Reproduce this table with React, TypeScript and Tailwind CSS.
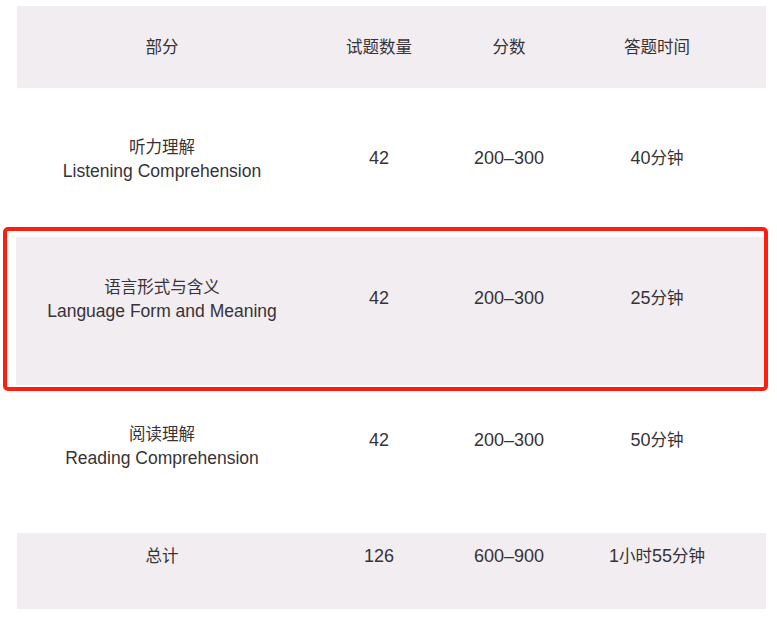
import React from "react";

const font = {
  fontFamily: '"Liberation Sans", "Noto Sans CJK SC", sans-serif',
};

const cols = "grid grid-cols-[290px_144px_116px_180px] text-center";

function Num({ children }: { children: string }) {
  return <span className="text-[18px]">{children}</span>;
}

function Cells({
  a,
  b,
  c,
  d,
  e,
  numPad = "pt-[11px]",
}: {
  a: string;
  b: string;
  c: string;
  d: string;
  e: string;
  numPad?: string;
}) {
  return (
    <div className={cols}>
      <div className="flex flex-col items-center leading-[24px]">
        <div>{a}</div>
        <div className="text-[17.5px]">{b}</div>
      </div>
      <div className={"leading-[24px] " + numPad}>
        <Num>{c}</Num>
      </div>
      <div className={"leading-[24px] " + numPad}>
        <Num>{d}</Num>
      </div>
      <div className={"leading-[24px] " + numPad}>
        <Num>{e}</Num>
        <span>分钟</span>
      </div>
    </div>
  );
}

export default function App() {
  return (
    <div
      className="w-[777px] h-[627px] bg-white text-[16.5px] text-[#383236] overflow-hidden"
      style={font}
    >
      <div className="pt-[6px]">
        <div className="ml-[17px] mr-[11px] h-[82px] bg-[#f1edf0] flex items-center">
          <div className={cols + " w-full"}>
            <div>部分</div>
            <div>试题数量</div>
            <div>分数</div>
            <div>答题时间</div>
          </div>
        </div>

        <div className="h-[139px] pl-[17px] pt-[47px]">
          <Cells a="听力理解" b="Listening Comprehension" c="42" d="200–300" e="40" />
        </div>

        <div className="ml-[3px] mr-[9px] h-[164px] border-[4px] border-[#fe1e10] rounded-[5px] pt-[6px] pb-[2px]">
          <div className="ml-[9px] h-[148px] bg-[#f1edf0] pt-[38px] pl-[1px]">
            <Cells a="语言形式与含义" b="Language Form and Meaning" c="42" d="200–300" e="25" />
          </div>
        </div>

        <div className="h-[142px] pl-[17px] pt-[31px]">
          <Cells
            a="阅读理解"
            b="Reading Comprehension"
            c="42"
            d="200–300"
            e="50"
            numPad="pt-[6px]"
          />
        </div>

        <div className="ml-[17px] mr-[11px] h-[76px] bg-[#f1edf0] pt-[11px]">
          <div className={cols}>
            <div className="leading-[24px]">总计</div>
            <div className="leading-[24px]">
              <Num>126</Num>
            </div>
            <div className="leading-[24px]">
              <Num>600–900</Num>
            </div>
            <div className="leading-[24px]">
              <Num>1</Num>
              <span>小时</span>
              <Num>55</Num>
              <span>分钟</span>
            </div>
          </div>
        </div>
      </div>
    </div>
  );
}
